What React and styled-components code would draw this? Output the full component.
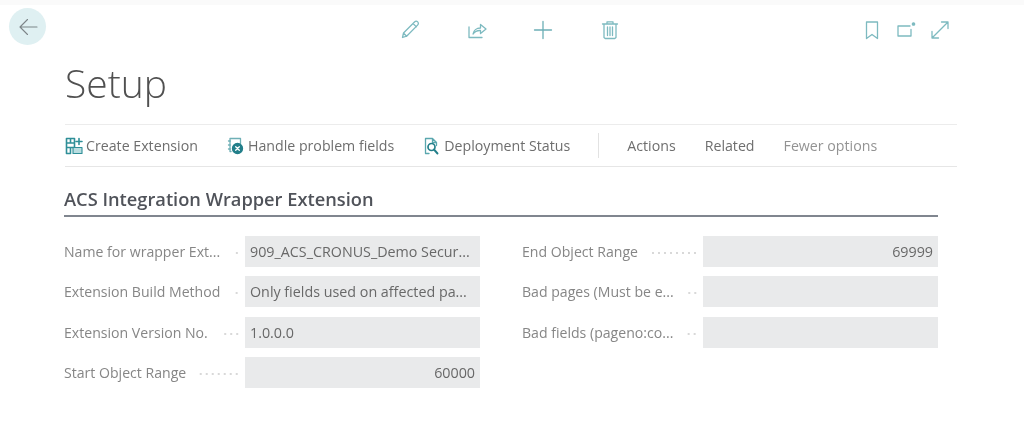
import React from 'react'
import styled, { createGlobalStyle } from 'styled-components'

const GlobalStyle = createGlobalStyle`
  html, body {
    margin: 0;
    padding: 0;
    background: #fff;
    font-family: 'Open Sans', 'Liberation Sans', sans-serif;
  }
`
const Page = styled.div`
  width: 1024px;
  height: 426px;
  overflow: hidden;
  background: #fff;
  box-sizing: border-box;
  filter: blur(0.4px);
`
const TopStrip = styled.div`
  height: 5px;
  background: #fafafa;
`
const TopBar = styled.div`
  display: flex;
  align-items: flex-start;
  height: 47px;
  padding: 3px 0 0 9px;
  box-sizing: border-box;
`
const BackButton = styled.div`
  width: 37px;
  height: 37px;
  border-radius: 50%;
  background: #dff0f2;
  display: flex;
  align-items: center;
  justify-content: center;
  flex: none;
`
const CentreIcons = styled.div`
  display: flex;
  gap: 44.5px;
  margin: 11px 0 0 353px;
`
const RightIcons = styled.div`
  display: flex;
  gap: 12px;
  margin: 11px 0 0 240px;
`
const Icon = styled.svg`
  width: ${(p) => p.$size || 22}px;
  height: ${(p) => p.$size || 22}px;
  fill: none;
  stroke: ${(p) => p.$color || '#7dbac0'};
  stroke-width: 1.3;
  stroke-linecap: round;
  stroke-linejoin: round;
  flex: none;
`
const Content = styled.div`
  padding-left: 65px;
  width: 892px;
`
const Title = styled.h1`
  margin: 0;
  height: 72px;
  font-size: 39px;
  line-height: 62px;
  font-weight: 300;
  color: #505050;
`
const Toolbar = styled.div`
  display: flex;
  align-items: center;
  height: 41px;
  border-top: 1px solid #ececec;
  border-bottom: 1px solid #e6e6e6;
  color: #6e6e6e;
  font-size: 14.2px;
`
const ToolButton = styled.div`
  display: flex;
  align-items: center;
  gap: 3px;
  margin-right: ${(p) => p.$gap || 29}px;
  white-space: nowrap;
`
const Divider = styled.div`
  width: 1px;
  height: 25px;
  background: #e2e2e2;
  margin: 0 28px 0 -1px;
`
const MenuItem = styled.div`
  margin-right: 29px;
  color: ${(p) => (p.$muted ? '#939393' : '#6e6e6e')};
  white-space: nowrap;
`
const SectionTitle = styled.h2`
  margin: 19px 0 0 -1px;
  width: 874px;
  height: 29px;
  font-size: 18.25px;
  line-height: 26px;
  font-weight: 600;
  color: #50535a;
  border-bottom: 2px solid #80868f;
`
const FieldGrid = styled.div`
  display: flex;
  gap: 42px;
  margin: 19px 0 0 -1px;
`
const Column = styled.div`
  display: flex;
  flex-direction: column;
  gap: 9.4px;
  width: 416px;
`
const Row = styled.div`
  display: flex;
  align-items: center;
  height: 31px;
`
const Label = styled.div`
  display: flex;
  align-items: center;
  width: 181px;
  flex: none;
  font-size: 14.1px;
  color: #868686;
  white-space: nowrap;
`
const Leader = styled.span`
  flex: 1;
  height: 2px;
  margin: 3px 5px 0 13px;
  background-image: radial-gradient(circle, #d6d6d6 0.7px, transparent 0.8px);
  background-size: 6px 2px;
  background-position: right center;
`
const Value = styled.div`
  flex: 1;
  height: 31px;
  line-height: 31px;
  padding: 0 5px;
  box-sizing: border-box;
  background: #e9eaeb;
  color: #686868;
  font-size: 14.3px;
  white-space: nowrap;
  overflow: hidden;
  text-align: ${(p) => (p.$right ? 'right' : 'left')};
`

const ArrowLeft = () => (
  <Icon viewBox="0 0 22 22" $color="#7c8588">
    <path d="M20 11H3M10.500 3.500 3 11l7.500 7.500" strokeWidth="1.100" />
  </Icon>
)
const Pencil = () => (
  <Icon viewBox="0 0 22 22">
    <path d="M3.500 18.500l1-4.500L15.500 3c1-1 2.300-1 3.200-.1s.9 2.200-.1 3.200L7.600 17.200zM4.500 14l3.100 3.200M14 4.500l3.400 3.400" />
  </Icon>
)
const Share = () => (
  <Icon viewBox="0 0 22 22">
    <path d="M3 8v10.500h13M7 15c.5-3.500 3.500-6 7.500-6V5.500L20 10l-5.500 4.500v-3c-3-.2-5.500.8-7.500 3.500z" />
  </Icon>
)
const Plus = () => (
  <Icon viewBox="0 0 22 22" $color="#6cafb6">
    <path d="M11 2.500v17M2.500 11h17" />
  </Icon>
)
const Trash = () => (
  <Icon viewBox="0 0 22 22">
    <path d="M3.500 5h15M8 5V2.800h6V5M5 5v13.500l1.200 1h9.600l1.200-1V5M8.500 8v8.500M11 8v8.500M13.500 8v8.500" />
  </Icon>
)
const Bookmark = () => (
  <Icon viewBox="0 0 22 22">
    <path d="M5.500 3h11v16.500L11 15.500l-5.500 4z" />
  </Icon>
)
const OpenNew = () => (
  <Icon viewBox="0 0 22 22">
    <path d="M15 7H3v10h13v-6.500" />
    <circle cx="18.500" cy="5" r="1.200" fill="#7dbac0" />
  </Icon>
)
const Expand = () => (
  <Icon viewBox="0 0 22 22">
    <path d="M3 19 19 3M12.500 3H19v6.500M3 12.500V19h6.500" />
  </Icon>
)
const CreateIcon = () => (
  <Icon viewBox="0 0 18 18" $size={18} $color="#2f8f98">
    <path d="M1.500 16.500v-15h8v9H5.500v6zM1.500 6h8M5.500 1.500V6M1.500 10.500h4" strokeWidth="1.600" />
    <path d="M14 1.500v6M11 4.500h6" strokeWidth="1.600" />
    <rect x="8" y="10.500" width="9" height="6" fill="#b9dde0" strokeWidth="1.100" />
  </Icon>
)
const ProblemIcon = () => (
  <Icon viewBox="0 0 18 18" $size={18} $color="#6fb0b6">
    <path d="M4 14.500H3V1.500h10.500v5M1.500 4h2M1.500 8h2M1.500 12h2" />
    <circle cx="10.500" cy="11.500" r="5" fill="#237f8a" stroke="#237f8a" />
    <path d="M8.700 9.700l3.600 3.600M12.300 9.700l-3.600 3.600" stroke="#fff" />
  </Icon>
)
const DeployIcon = () => (
  <Icon viewBox="0 0 18 18" $size={18} $color="#5aa7ae">
    <path d="M6 16.500H2.500v-15h7l4 4v3M9.500 1.500v4h4" />
    <circle cx="8.500" cy="10" r="3.500" strokeWidth="1.700" stroke="#237f8a" />
    <path d="M11 12.500l3.500 4" strokeWidth="1.900" stroke="#237f8a" />
  </Icon>
)

const leftFields = [
  { label: 'Name for wrapper Ext...', value: '909_ACS_CRONUS_Demo Secur...' },
  { label: 'Extension Build Method', value: 'Only fields used on affected pa...' },
  { label: 'Extension Version No.', value: '1.0.0.0' },
  { label: 'Start Object Range', value: '60000', right: true },
]
const rightFields = [
  { label: 'End Object Range', value: '69999', right: true },
  { label: 'Bad pages (Must be e...', value: '' },
  { label: 'Bad fields (pageno:co...', value: '' },
]

function FieldColumn({ fields }) {
  return (
    <Column>
      {fields.map((field) => (
        <Row key={field.label}>
          <Label>
            {field.label}
            <Leader />
          </Label>
          <Value $right={field.right}>{field.value}</Value>
        </Row>
      ))}
    </Column>
  )
}

export default function App() {
  return (
    <Page>
      <GlobalStyle />
      <TopStrip />
      <TopBar>
        <BackButton>
          <ArrowLeft />
        </BackButton>
        <CentreIcons>
          <Pencil />
          <Share />
          <Plus />
          <Trash />
        </CentreIcons>
        <RightIcons>
          <Bookmark />
          <OpenNew />
          <Expand />
        </RightIcons>
      </TopBar>
      <Content>
        <Title>Setup</Title>
        <Toolbar>
          <ToolButton>
            <CreateIcon />
            Create Extension
          </ToolButton>
          <ToolButton>
            <ProblemIcon />
            Handle problem fields
          </ToolButton>
          <ToolButton>
            <DeployIcon />
            Deployment Status
          </ToolButton>
          <Divider />
          <MenuItem>Actions</MenuItem>
          <MenuItem>Related</MenuItem>
          <MenuItem $muted>Fewer options</MenuItem>
        </Toolbar>
        <SectionTitle>ACS Integration Wrapper Extension</SectionTitle>
        <FieldGrid>
          <FieldColumn fields={leftFields} />
          <FieldColumn fields={rightFields} />
        </FieldGrid>
      </Content>
    </Page>
  )
}
